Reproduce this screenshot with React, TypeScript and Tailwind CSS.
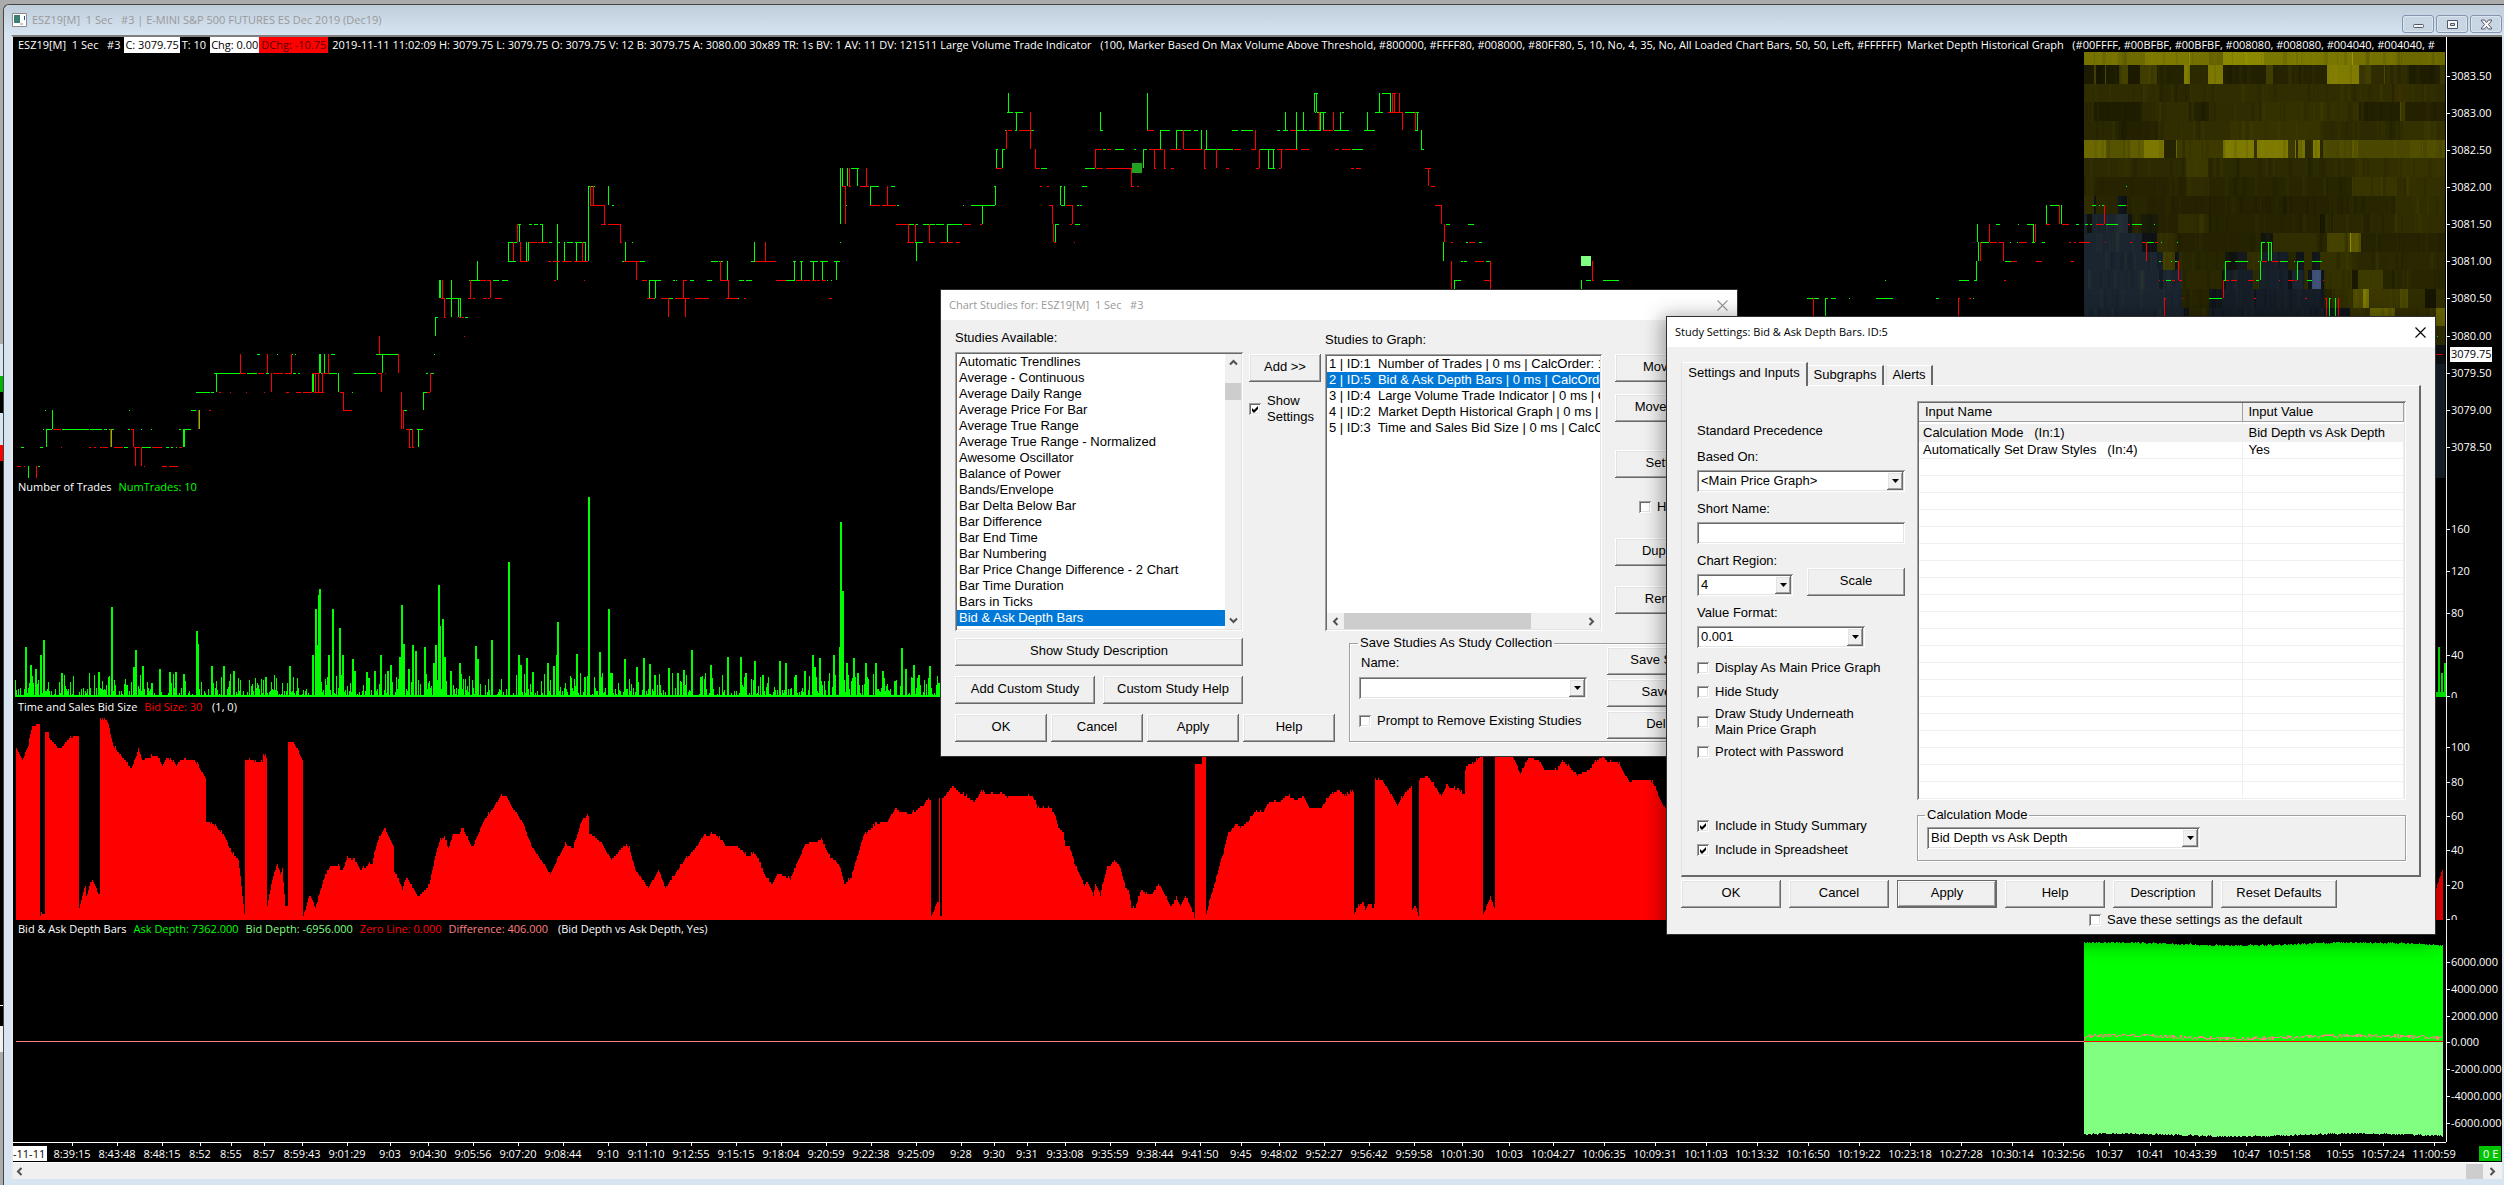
import { useId, type ReactNode } from 'react'
import clsx from 'clsx'

const SUNKEN = 'shadow-[inset_1px_1px_#a0a0a0,inset_-1px_-1px_#fff,inset_2px_2px_#696969,inset_-2px_-2px_#e3e3e3]'
const RAISED = 'shadow-[inset_-1px_-1px_#696969,inset_1px_1px_#fff,inset_-2px_-2px_#a0a0a0,inset_2px_2px_#e3e3e3]'

/* ---------- chart data ---------- */

// plot area in drawing units, one unit per pixel at full size
const LEFT = 13
const WIDTH = 2433

const PANELS = [
    { top: 37, size: 441 },
    { top: 478, size: 220 },
    { top: 698, size: 222 },
    { top: 920, size: 222 },
]

// y of every quarter point, from 3083.25 down to 3078.25
const TICKS = [93, 112, 130, 149, 168, 186, 205, 224, 242, 261, 280, 298, 317, 336, 354, 373, 392, 410, 429, 447, 466, 479]

// horizontal runs for each price tick
const RUNS = [
    'g1315-1318 g1382-1391 r1392-1396',
    'g1007-1013 g1015-1023 g1315-1316 g1317-1326 g1342-1344 g1375-1383 r1388-1402 g1405-1419',
    'g1005-1007 r1008-1012 g1015-1017 r1019-1030 g1030-1034 g1100-1103 r1147-1154 g1160-1170 g1176-1191 g1194-1198 g1232-1238 g1241-1253 g1277-1280 g1283-1288 r1290-1296 g1296-1307 g1309-1321 r1323-1333 g1334-1349 g1364-1375 g1415-1418',
    'g996-998 g1002-1005 r1096-1102 g1103-1106 r1107-1111 g1115-1124 g1134-1136 g1143-1147 r1149-1163 r1170-1181 r1184-1202 g1205-1216 g1217-1233 r1234-1241 r1251-1256 g1259-1275 r1277-1283 r1285-1298 r1301-1309 r1335-1339 r1342-1351 g1352-1363 g1421-1424',
    'g851-859 r996-1002 r1035-1040 g1041-1047 g1085-1095 r1096-1103 r1106-1131 r1154-1156 r1164-1166 r1171-1174 r1204-1206 r1226-1229 r1256-1259 g1268-1275 r1279-1281 r1351-1354 r1356-1361 r1425-1431',
    'g589-595 g608-609 r842-846 r849-851 r860-869 g870-879 g891-895 g994-996 r1040-1042 r1047-1049 g1060-1062 g1082-1087 r1131-1134 r1137-1139 r1431-1435 g2126-2127',
    'r590-604 g612-614 g846-847 r870-880 r882-896 g897-899 g963-964 g971-995 r1049-1053 g1061-1065 r1066-1072 g1077-1079 g1080-1082 r1435-1442 g2050-2059 g2092-2096 g2099-2100 g2102-2105 g2118-2126 r2127-2128',
    'g517-521 g529-532 g534-538 g540-543 g557-558 r601-606 r608-620 r896-908 g909-914 g915-918 g923-935 g936-944 g947-962 r964-971 r980-982 g1056-1059 r1070-1072 g1075-1080 g1446-1450 g1468-1474 g1996-2000 g2018-2019 g2027-2033 r2046-2050 r2062-2069 g2076-2079 g2085-2088 g2090-2092 r2096-2104 g2106-2118 r2128-2130 g2132-2142 g2154-2155',
    'g508-517 r529-537 r538-548 g549-552 g557-560 g567-573 g575-585 r620-622 g632-633 g840-841 r907-914 g915-923 r929-935 r940-947 r948-953 r956-960 r1054-1056 r1074-1075 r1451-1453 g1466-1468 r1469-1475 g1479-1482 g1980-1989 r1990-1997 r1999-2003 g2010-2011 g2017-2018 r2019-2027 g2032-2035 g2042-2045 r2069-2071 r2074-2076 r2079-2090 r2105-2106 r2130-2132 r2142-2147 g2147-2154 r2155-2158 g2161-2162 g2177-2178 g2262-2265 g2267-2272',
    'g508-516 r520-528 r548-551 r553-560 r562-572 r574-588 g622-626 r624-640 g640-645 g711-718 g719-723 g751-755 r755-776 g793-796 g800-803 g810-818 g820-828 g834-840 g1461-1463 g1464-1467 r1475-1484 g1486-1490 g2005-2011 r2011-2017 r2036-2042 r2071-2074 g2159-2161 r2162-2163 g2171-2172 g2175-2177 r2177-2179 g2225-2231 g2235-2237 g2237-2248 g2258-2259 r2262-2267 r2272-2279 g2280-2288 g2294-2295 g2297-2304 g2312-2322',
    'g469-480 r480-486 r487-491 g493-499 g502-508 r554-556 r584-585 r642-647 g649-661 g673-675 g676-677 r684-687 g690-694 g707-712 r720-728 g739-744 g746-752 r776-786 g786-795 r796-803 r804-810 r812-816 r817-820 r822-826 g827-828 g831-832 g1455-1461 r1484-1490 g1586-1591 r1592-1594 g1603-1619 g1885-1886 g1959-1969 g1974-1977 r2004-2006 r2159-2160 r2163-2164 g2166-2171 r2172-2175 r2179-2182 g2223-2226 r2226-2229 r2231-2237 r2248-2254 g2256-2259 r2279-2280 r2288-2294 r2295-2297 g2307-2312 r2323-2324',
    'r441-445 g446-461 r468-471 r473-475 r483-487 r488-490 r495-502 r647-654 g654-655 r661-668 g668-673 r675-690 r695-709 r726-738 g738-739 r744-746 r829-832 g1807-1819 g1811-1813 g1826-1828 g1831-1836 g1849-1850 g1876-1893 g1936-1939 r1958-1960 r1969-1971 g1973-1974 r2164-2166 r2182-2183 g2209-2222 r2254-2256 r2305-2307 r2325-2327 g2329-2331 r2338-2339',
    'g435-438 r444-446 r459-461 r462-464 g465-468',
    'r464-465 g2437-2438',
    'g257-260 g277-278 g291-293 g295-296 g331-335 g376-398 g434-435 r2436-2443',
    'g214-240 r240-246 g247-257 r258-264 g266-269 r273-283 r285-292 g293-296 g298-300 r312-320 g321-323 r324-329 g329-337 g354-376 r378-382 r385-386 g426-428 g430-434',
    'g196-210 g211-214 r219-221 r230-231 r246-247 r264-265 r286-289 r296-301 r303-312 r314-324 r340-344 g352-353 g423-427 r427-430',
    'g45-46 g129-130 g191-196 r209-211 r343-352 g404-407',
    'g43-44 g46-52 r53-61 g62-89 g90-102 g104-107 g109-114 g128-130 r131-134 g141-142 g151-152 g179-181 g184-191 r406-409 g410-412 g417-423',
    'g21-24 g40-43 r61-62 r89-91 r94-96 r100-102 r103-108 r114-123 g124-128 r134-140 g141-151 r152-162 g166-169 g171-173 g176-177 r179-182 r409-411 r412-414',
    'r17-21 r24-25 g38-40 r144-145 r162-167 r169-178',
]

// vertical strokes: colour, x, from tick, to tick
const STEMS =
    'g28:20-21 r36:20-21 g46:18-19 g52:17-18 r110:18-19 g111:18-19 r133:18-19 r135:19-20 r141:19-20 g183:18-19 g184:18-19 r198:17-18 g199:17-18 g216:15-16 r240:14-15 r267:14-15 r271:15-16 r291:14-15 g312:15-16 g313:15-16 r315:15-16 r318:15-16 r322:15-16 g319:14-15 g320:14-15 g324:14-15 r328:14-15 g338:15-16 r343:16-17 r379:13-14 r381:15-16 g382:14-15 r398:14-15 r401:16-18 r403:17-18 r409:18-19 r412:18-19 g418:18-19 g423:16-17 r430:15-16 ' +
    'g435:12-13 g439:10-11 g440:10-11 r442:10-11 r444:11-12 g451:10-12 g458:11-12 g460:11-12 r470:10-11 g477:9-10 r490:10-11 g508:8-9 r513:8-9 r517:7-8 g519:7-8 r520:8-9 g526:8-9 g528:8-9 g542:7-8 g557:7-10 g564:8-9 g576:8-9 r582:8-9 g585:8-9 g588:5-9 r590:5-6 r593:5-6 r604:6-7 g608:5-6 r620:7-8 g625:8-9 r636:9-10 g649:10-11 g655:10-11 r668:11-12 r683:10-11 r685:11-12 r720:9-10 g727:9-10 r728:10-11 g754:8-9 r765:8-9 g794:9-10 g801:9-10 g813:9-10 g822:9-10 g836:9-10 ' +
    'g840:4-7 g842:4-5 r845:5-7 g847:4-5 r849:4-5 g857:4-5 r866:4-5 g870:5-6 r887:5-6 r908:7-8 r915:7-8 g916:8-9 r929:7-8 g947:7-8 g982:6-7 g995:5-6 g996:3-4 g1002:3-4 r1006:2-3 g1008:0-1 g1016:1-2 r1030:1-3 r1035:3-4 r1052:6-7 r1053:7-8 g1055:7-8 g1060:5-6 g1064:5-6 r1072:6-7 r1095:3-4 g1100:1-2 r1131:4-5 g1143:3-4 g1147:0-2 r1154:3-4 g1160:2-3 r1164:3-4 g1176:2-3 r1183:2-3 g1201:2-3 r1204:3-4 g1206:2-3 r1216:3-4 r1255:2-3 r1259:3-4 g1268:3-4 g1273:3-4 r1281:3-4 g1285:1-2 g1296:1-3 g1303:1-2 g1314:0-1 g1316:0-1 r1319:1-2 g1320:1-2 g1323:1-2 r1333:1-2 g1340:1-2 g1367:1-2 g1379:0-1 g1390:0-1 r1392:0-1 r1394:0-1 r1399:0-1 r1402:1-2 r1415:1-2 g1417:1-2 g1421:2-3 r1428:4-5 r1441:6-7 g1443:8-9 r1444:7-8 r1451:9-12 g1454:10-12 r1490:9-12 g1581:10-12 r1592:9-10 ' +
    'r1813:11-13 g1825:11-13 r1958:11-13 g1976:9-10 g1977:7-8 g1978:8-9 r1980:8-9 r1989:7-8 r2003:8-9 g2033:7-8 r2035:7-8 g2046:6-7 r2059:6-7 g2061:6-7 r2104:6-7 r2146:8-9 r2164:11-12 r2178:9-10 r2223:10-11 g2225:9-10 g2260:9-10 g2261:8-9 g2268:8-9 g2271:8-9 g2297:9-10 r2326:11-12 g2329:11-12 g2335:11-12 r2338:11-12'

// market depth rows: y, then "start colour" pairs up to the right edge
const DEPTH: [number, string][] = [
    [52, '2084 757200 2118 6c6900 2145 7d7900 2189 a09a00 2190 747000 2209 666200 2223 8a8700 2264 7a7700 2352 9a9500 2353 747100 2398 6b6800'],
    [65, '2084 1c1a00 2094 403e00 2096 181700 2105 4a4700 2106 1c1b00 2119 454200 2128 1b1a00 2140 403d00 2157 242300 2184 807c00 2190 2b2900 2208 7d7900 2223 222000 2266 403d00 2273 262400 2327 7f7b00 2359 413e00 2371 2e2c00 2384 4b4800 2385 2e2c00 2409 1f1d00 2440 383600'],
    [84, '2084 2e2c00 2158 2a2800 2190 302e00 2394 342e00 2409 302e00'],
    [102, '2084 2c2a00 2094 1f1d00 2142 2b2900 2158 302e00 2189 232100 2209 2e2c00 2262 343100 2359 222000 2400 4f4c00 2401 383500 2405 232100'],
    [121, '2084 2a2800 2118 232100 2158 302e00 2230 363300 2323 2c2a00 2400 343100'],
    [140, '2084 6b6800 2106 555200 2129 605d00 2144 7b7700 2164 262400 2176 686400 2177 3d3a00 2223 6f6b00 2225 7e7a00 2254 343100 2257 7e7a00 2288 3d3a00 2295 7b7700 2296 2e2c00 2298 757100 2305 2c2a00 2313 7e7a00 2320 2a2800 2323 4a4700 2352 5b5800 2358 4a4700 2410 514e00'],
    [158, '2084 2c2a00 2186 3b3800 2208 2c2a00 2352 322f00 2398 363300'],
    [177, '2084 262400 2186 2e2c00 2209 282600 2352 383500 2398 322f00'],
    [196, '2084 302e00 2094 0f1318 2096 282600 2118 10151b 2127 282600 2140 242200 2352 282600 2395 302e00'],
    [214, '2084 1b242c 2087 10110b 2092 1a242e 2117 1f2a35 2128 10140f 2132 242300 2141 1a1c08 2158 242200 2178 302e00 2209 262400 2320 141500 2325 2a2800 2395 302e00'],
    [233, '2084 1a2530 2142 0e1214 2157 2e2c00 2177 242200 2261 12150b 2273 302e00 2320 282600 2327 454200 2350 908c00 2351 5e5a00 2361 262400'],
    [252, '2084 1a2530 2157 161f28 2163 403d00 2175 10151b 2179 282600 2225 10130e 2237 15191c 2247 302e00 2261 151d26 2288 282600 2296 10151b 2304 302e00 2312 12161a 2320 343100 2352 2a2800'],
    [270, '2084 1a2530 2159 121a22 2163 1a2530 2182 2a2800 2222 10140f 2226 151d26 2253 302e00 2259 15202a 2288 0e1216 2292 1a2530 2304 302e00 2308 10151b 2312 3f5077 2321 10151b 2324 343100 2352 1a1900 2358 3d3a00 2383 282600'],
    [289, '2084 1a2530 2182 262400 2209 0f151b 2222 151d26 2254 0f151b 2256 151d26 2324 262400 2332 302e00 2353 4b4800 2363 7b7700 2369 3a3700 2400 4e4b00 2408 302e00 2425 161500 2436 302e00'],
    [308, '2084 1a2530 2184 10151b 2189 282600 2209 151d26 2324 0f151b 2350 343100 2370 686400 2395 322f00 2436 686400'],
    [326, '2436 343100'],
    [345, '2436 0e1216'],
    [364, '2436 17212b'],
    [479, ''],
]

// tall bars of the trade count: x, height
const PEAKS =
    '25,50 30,32 35,28 40,42 43,57 61,24 98,25 111,90 133,30 135,47 142,31 159,28 169,25 175,25 183,23 196,66 197,53 211,31 223,31 233,26 265,20 289,31 312,42 315,88 317,52 318,102 319,108 328,42 332,88 339,69 342,42 352,38 354,26 366,25 374,26 380,42 387,26 390,32 399,40 401,92 403,53 408,28 412,52 415,46 424,50 433,34 435,52 438,112 439,71 442,78 444,40 450,26 459,34 475,51 477,38 491,57 508,135 518,42 520,32 526,39 532,25 547,34 553,31 556,42 557,75 576,43 584,20 588,200 599,45 608,88 611,24 624,38 636,30 643,39 649,33 654,22 668,29 677,24 683,27 691,47 700,20 710,32 727,40 740,40 745,24 754,36 762,22 779,36 785,34 795,22 804,26 812,42 814,30 819,39 833,42 839,50 840,175 842,106 846,34 853,39 857,24 865,34 875,34 882,26 894,16 901,49 905,28 913,32 918,22 929,31 938,14 940,41 2438,50 2441,24 2444,34'

// bid size outline
const BID_SIZE =
    '16,748 22,760 28,745 31,729 37,724 40,724 40,917 41,912 44,916 45,731 48,731 49,738 59,750 69,738 78,735 79,908 85,885 86,896 92,879 99,896 100,719 106,719 113,746 131,769 138,750 142,760 156,755 162,765 166,757 176,765 180,760 194,760 206,779 206,821 216,827 224,836 231,852 238,859 244,913 245,760 262,762 263,755 266,757 267,905 272,879 277,864 280,874 282,870 285,906 287,906 288,741 293,741 302,759 303,916 309,895 312,899 315,908 324,877 330,866 337,865 341,872 347,858 355,861 360,870 372,863 376,845 384,827 393,846 394,871 402,889 406,877 418,897 429,885 433,865 439,842 444,836 448,848 453,833 459,833 462,828 472,848 483,822 492,809 501,795 505,795 513,809 522,822 531,846 550,874 565,844 573,848 582,819 588,815 589,833 600,842 611,860 624,845 629,848 635,870 648,888 658,870 665,888 683,862 695,848 703,836 715,834 725,845 737,846 746,856 755,854 767,880 772,884 778,873 790,879 805,844 821,840 830,857 839,865 844,884 851,877 863,836 875,824 887,821 894,810 911,814 923,805 926,800 930,800 931,916 937,902 939,798 940,798 940,916 942,798 947,793 952,786 960,793 974,802 980,792 994,795 1002,793 1007,797 1019,795 1032,796 1037,807 1049,808 1054,813 1058,827 1063,832 1065,846 1069,846 1074,863 1084,886 1087,881 1093,895 1095,883 1100,895 1106,870 1114,860 1120,867 1125,887 1129,893 1131,907 1135,907 1141,889 1146,894 1152,894 1158,884 1164,893 1171,907 1176,898 1180,905 1185,895 1189,903 1194,917 1195,764 1201,764 1202,750 1205,750 1206,914 1208,905 1216,878 1223,853 1227,836 1236,823 1240,828 1248,821 1254,812 1263,812 1268,803 1279,802 1286,795 1295,800 1303,796 1309,807 1320,809 1328,797 1338,790 1345,796 1353,791 1354,913 1357,908 1362,902 1365,909 1368,903 1373,909 1374,903 1375,779 1381,779 1390,793 1397,805 1406,791 1411,786 1412,910 1415,905 1418,915 1419,779 1427,776 1432,783 1441,796 1446,786 1458,790 1464,795 1465,769 1468,764 1474,763 1480,756 1482,756 1483,914 1490,897 1494,908 1495,748 1510,750 1520,774 1528,757 1539,761 1544,769 1557,769 1562,760 1567,766 1577,775 1589,770 1596,761 1603,756 1606,762 1618,763 1629,782 1636,780 1651,781 1656,790 1661,803 1668,812 2430,905 2436,887 2443,867'

const TIMES =
    '72 8:39:15,117 8:43:48,162 8:48:15,200 8:52,231 8:55,264 8:57,302 8:59:43,347 9:01:29,390 9:03,428 9:04:30,473 9:05:56,518 9:07:20,563 9:08:44,608 9:10,646 9:11:10,691 9:12:55,736 9:15:15,781 9:18:04,826 9:20:59,871 9:22:38,916 9:25:09,961 9:28,994 9:30,1027 9:31,1065 9:33:08,1110 9:35:59,1155 9:38:44,1200 9:41:50,1241 9:45,1279 9:48:02,1324 9:52:27,1369 9:56:42,1414 9:59:58,1462 10:01:30,1509 10:03,1553 10:04:27,1604 10:06:35,1655 10:09:31,1706 10:11:03,1757 10:13:32,1808 10:16:50,1859 10:19:22,1910 10:23:18,1961 10:27:28,2012 10:30:14,2063 10:32:56,2109 10:37,2150 10:41,2195 10:43:39,2246 10:47,2289 10:51:58,2340 10:55,2383 10:57:24,2434 11:00:59'

const SCALES: [number, string][][] = [
    [[76, '3083.50'], [113, '3083.00'], [150, '3082.50'], [187, '3082.00'], [224, '3081.50'], [261, '3081.00'], [298, '3080.50'], [336, '3080.00'], [373, '3079.50'], [410, '3079.00'], [447, '3078.50']],
    [[529, '160'], [571, '120'], [613, '80'], [655, '40'], [696, '0']],
    [[747, '100'], [782, '80'], [816, '60'], [850, '40'], [885, '20'], [919, '0']],
    [[962, '6000.000'], [989, '4000.000'], [1016, '2000.000'], [1042, '0.000'], [1069, '-2000.000'], [1096, '-4000.000'], [1123, '-6000.000']],
]

const STUDIES = [
    'Automatic Trendlines', 'Average - Continuous', 'Average Daily Range', 'Average Price For Bar', 'Average True Range',
    'Average True Range - Normalized', 'Awesome Oscillator', 'Balance of Power', 'Bands/Envelope', 'Bar Delta Below Bar',
    'Bar Difference', 'Bar End Time', 'Bar Numbering', 'Bar Price Change Difference - 2 Chart', 'Bar Time Duration',
    'Bars in Ticks', 'Bid & Ask Depth Bars', 'Bid & Ask Depth Bars Old',
]

const GRAPHED = [
    '1 | ID:1  Number of Trades | 0 ms | CalcOrder: 1',
    '2 | ID:5  Bid & Ask Depth Bars | 0 ms | CalcOrder: 2',
    '3 | ID:4  Large Volume Trade Indicator | 0 ms | CalcOrder: 3',
    '4 | ID:2  Market Depth Historical Graph | 0 ms | CalcOrder: 4',
    '5 | ID:3  Time and Sales Bid Size | 0 ms | CalcOrder: 5',
]

/* ---------- helpers ---------- */

const random = (n: number) => {
    const v = Math.sin(n * 12.9898 + 4.137) * 43758.5453
    return v - Math.floor(v)
}

const points = (s: string) => s.split(' ').map((p) => p.split(',').map(Number))

const runPath = (color: string) =>
    RUNS.map((row, i) =>
        row.split(' ').filter((r) => r[0] === color).map((r) => {
            const [a, b] = r.slice(1).split('-').map(Number)
            return `M${a} ${TICKS[i]}h${b - a}v1h${a - b}z`
        }).join('')
    ).join('')

const stemPath = (color: string) =>
    STEMS.split(' ').filter((s) => s[0] === color).map((s) => {
        const [x, range] = s.slice(1).split(':')
        const [a, b] = range.split('-').map(Number)
        return `M${x} ${TICKS[a]}h1V${TICKS[b]}h-1z`
    }).join('')

const tradesPath = () => {
    let d = ''
    for (let x = 15; x < 943; x++) {
        const r = random(x)
        const h = r > 0.75 ? 8 + random(x + 5000) * 16 : r > 0.45 ? 3 + random(x + 900) * 6 : 2
        d += `M${x} ${697 - Math.round(h)}h1V697h-1z`
    }
    for (const [x, h] of points(PEAKS)) d += `M${x} ${697 - h}h2V697h-2z`
    return d + 'M2436 692h9v5h-9z'
}

const bidSizePath = () => {
    const p = points(BID_SIZE)
    let d = ''
    for (let i = 0; i < p.length - 1; i++) {
        const [x1, y1] = p[i]
        const [x2, y2] = p[i + 1]
        const jump = Math.abs(y2 - y1) > 60
        for (let x = x1; x < x2; x++) {
            const y = jump ? y1 : y1 + ((y2 - y1) * (x - x1)) / (x2 - x1)
            const bump = random(x) > 0.85 ? 2 : 0
            d += `M${x} ${Math.round(y / 2) * 2 - bump}h1V920h-1z`
        }
    }
    return d
}

const edge = (base: number, amp: number, seed: number) => {
    let d = ''
    for (let x = 2084; x < 2443; x++) {
        const wave = Math.sin((x - 2060) / 38) * -1.5
        d += `L${x} ${Math.round(base + wave + (random(x + seed) - 0.5) * amp)}`
    }
    return d
}

const pct = (v: number, from: number, size: number) => `${((v - from) / size) * 100}%`

/* ---------- chart ---------- */

const Plot = ({ index, label, children }: { index: number, label: ReactNode, children: ReactNode }) => {
    const { top, size } = PANELS[index]
    return (
        <div className="relative min-h-0 overflow-hidden">
            <svg className="absolute inset-0 h-full w-full" viewBox={`${LEFT} ${top} ${WIDTH} ${size}`} preserveAspectRatio="none" shapeRendering="crispEdges" aria-hidden="true">
                {children}
            </svg>
            <p className={clsx('relative flex items-center overflow-hidden whitespace-pre pl-[5px] text-white', index === 0 ? 'h-4' : 'h-[18px] gap-[7px]')}>
                {label}
            </p>
        </div>
    )
}

const Scale = ({ index, children }: { index: number, children?: ReactNode }) => {
    const { top, size } = PANELS[index]
    return (
        <svg className="h-full w-full overflow-hidden border-l border-white fill-white">
            {SCALES[index].map(([y, text]) => (
                <g key={text}>
                    <rect x="0" y={pct(y, top, size)} width="3" height="1" />
                    <text x="4" y={pct(y, top, size)} dy="4">{text}</text>
                </g>
            ))}
            {children}
        </svg>
    )
}

const DepthMap = () => (
    <>
        {DEPTH.slice(0, -1).map(([y, row], i) => {
            const cells = row.split(' ')
            const height = DEPTH[i + 1][0] - y
            return cells.filter((_, k) => k % 2 === 0).map((start, k) => {
                const x = Number(start)
                const end = Number(cells[k * 2 + 2] ?? 2445)
                return <rect key={`${y}-${x}`} x={x} y={y} width={end - x} height={height} fill={`#${cells[k * 2 + 1]}`} />
            })
        })}
        {DEPTH.slice(0, 15).map(([y], i) =>
            Array.from({ length: 50 }, (_, k) => (
                <rect
                    key={`${y}-${k}`}
                    x={2084 + Math.floor(random(i * 97 + k) * 355)}
                    y={y}
                    width={1 + Math.floor(random(i * 31 + k + 400) * 4)}
                    height={DEPTH[i + 1][0] - y}
                    fill={k % 2 ? '#000' : '#fff040'}
                    opacity={k % 2 ? 0.08 : 0.02}
                />
            ))
        )}
    </>
)

const Chart = () => (
    <div className="flex min-h-0 flex-1 flex-col bg-black font-['Open_Sans','Noto_Sans',sans-serif] text-[11px] leading-4">
        <div className="grid min-h-0 flex-1 grid-cols-[1fr_56px] grid-rows-[441fr_220fr_222fr_222fr]">
            <Plot
                index={0}
                label={
                    <>
                        <span>ESZ19[M]  1 Sec   #3</span>
                        <span className="ml-1 bg-white px-px text-black">C: 3079.75</span>
                        <span className="ml-0.5">T: 10</span>
                        <span className="ml-1 bg-white px-px text-black">Chg: 0.00</span>
                        <span className="bg-[#ff0000] px-0.5 text-[#5a0000]">DChg: -10.75</span>
                        <span className="ml-1">
                            2019-11-11 11:02:09 H: 3079.75 L: 3079.75 O: 3079.75 V: 12 B: 3079.75 A: 3080.00 30x89 TR: 1s BV: 1 AV: 11 DV: 121511 Large Volume Trade Indicator   (100, Marker Based On Max Volume Above Threshold, #800000, #FFFF80, #008000, #80FF80, 5, 10, No, 4, 35, No, All Loaded Chart Bars, 50, 50, Left, #FFFFFF)  Market Depth Historical Graph   (#00FFFF, #00BFBF, #00BFBF, #008080, #008080, #004040, #004040, #
                        </span>
                    </>
                }
            >
                <DepthMap />
                <path d={runPath('g') + stemPath('g')} fill="#00ff00" />
                <path d={runPath('r') + stemPath('r')} fill="#ff0000" />
                <rect x="1132" y="163" width="10" height="10" fill="#22a022" />
                <rect x="1581" y="256" width="10" height="10" fill="#80ff80" />
            </Plot>
            <Scale index={0}>
                <rect x="3" y={pct(347, 37, 441)} width="42" height="15" />
                <text className="fill-black" x="4" y={pct(354, 37, 441)} dy="4">3079.75</text>
            </Scale>

            <Plot index={1} label={<><span>Number of Trades</span><span className="text-[#00ff00]">NumTrades: 10</span></>}>
                <path d={tradesPath()} fill="#00ff00" />
            </Plot>
            <Scale index={1} />

            <Plot index={2} label={<><span>Time and Sales Bid Size</span><span className="text-[#ff0000]">Bid Size: 30</span><span> (1, 0)</span></>}>
                <path d={bidSizePath()} fill="#ff0000" />
            </Plot>
            <Scale index={2} />

            <Plot
                index={3}
                label={
                    <>
                        <span>Bid &amp; Ask Depth Bars</span>
                        <span className="text-[#00ff00]">Ask Depth: 7362.000</span>
                        <span className="text-[#80ff80]">Bid Depth: -6956.000</span>
                        <span className="text-[#ff0000]">Zero Line: 0.000</span>
                        <span className="text-[#ff8080]">Difference: 406.000</span>
                        <span> (Bid Depth vs Ask Depth, Yes)</span>
                    </>
                }
            >
                <path d={`M2084 1041${edge(944, 2, 10)}L2443 944V1041z`} fill="#00ff00" />
                <path d={`M2084 1041${edge(1135, 2, 70)}L2443 1137V1041z`} fill="#80ff80" />
                <path d="M2084 1041h359v1h-359z" fill="#ff0000" />
                <path d="M16 1041h2068v1H16z" fill="#ff8080" />
                <path d={`M2084 1041${edge(1037, 4, 200)}`} fill="none" stroke="#ff8080" />
            </Plot>
            <Scale index={3} />
        </div>
        <svg className="h-5 w-full shrink-0 fill-white">
            <rect width={pct(2446, 13, 2489)} height="1" />
            <rect y="4" width="34" height="15" />
            <text className="fill-black" x="0" y="16">-11-11</text>
            {TIMES.split(',').map((t) => {
                const [x, text] = t.split(' ')
                const left = pct(Number(x), 13, 2489)
                return (
                    <g key={text}>
                        <rect x={left} width="1" height="4" />
                        <text x={left} y="16" textAnchor="middle">{text}</text>
                    </g>
                )
            })}
            <rect x={pct(2479, 13, 2489)} y="4" width="22" height="15" fill="#00c400" />
            <text x={pct(2483, 13, 2489)} y="16">0 E</text>
        </svg>
    </div>
)

/* ---------- classic controls ---------- */

const Chevron = ({ turn }: { turn?: string }) => (
    <svg className={clsx('size-[9px]', turn)} viewBox="0 0 9 9" fill="none" stroke="#505050" strokeWidth="2" aria-hidden="true">
        <path d="M1 6.5 4.5 3 8 6.5" />
    </svg>
)

const Button = ({ children, className, pressed }: { children: ReactNode, className?: string, pressed?: boolean }) => (
    <button
        type="button"
        className={clsx('h-7 shrink-0 overflow-hidden whitespace-nowrap bg-[#f0f0f0] pb-0.5 text-center', pressed && 'border border-[#696969]', RAISED, className)}
    >
        {children}
    </button>
)

const Check = ({ children, checked, className }: { children: ReactNode, checked?: boolean, className?: string }) => {
    const id = useId()
    return (
        <div className={clsx('flex items-center gap-1.5', className)}>
            <span className="grid size-3 shrink-0">
                <input id={id} type="checkbox" defaultChecked={checked} className={clsx('peer col-start-1 row-start-1 size-3 appearance-none bg-white', SUNKEN)} />
                <svg className="pointer-events-none invisible z-10 col-start-1 row-start-1 size-3 peer-checked:visible" viewBox="0 0 12 12" aria-hidden="true">
                    <path d="M3 5l2 2 4-4v3l-4 4-2-2z" />
                </svg>
            </span>
            <label htmlFor={id} className="whitespace-pre leading-4">{children}</label>
        </div>
    )
}

const Select = ({ value, id, label, className }: { value: string, id?: string, label?: string, className?: string }) => (
    <div className={clsx('relative h-[22px] shrink-0', className)}>
        <select id={id} aria-label={label} defaultValue={value} className={clsx('h-full w-full appearance-none bg-white pl-1', SUNKEN)}>
            <option>{value}</option>
        </select>
        <span className={clsx('pointer-events-none absolute inset-y-0.5 right-0.5 flex w-4 items-center justify-center bg-[#f0f0f0]', RAISED)}>
            <svg className="h-1 w-[7px]" viewBox="0 0 7 4" aria-hidden="true"><path d="M0 0h7L3.5 4z" /></svg>
        </span>
    </div>
)

const Close = ({ className }: { className?: string }) => (
    <button type="button" aria-label="Close" className={clsx('mr-[9px]', className)}>
        <svg className="size-[11px]" viewBox="0 0 11 11" stroke="currentColor" strokeWidth="1.1"><path d="M.5.5l10 10M10.5.5l-10 10" /></svg>
    </button>
)

const Dialog = ({ title, className, muted, children }: { title: string, className: string, muted?: boolean, children: ReactNode }) => (
    <section className={clsx("absolute flex flex-col border border-[#303030] bg-[#f0f0f0] font-['Liberation_Sans',Arial,sans-serif] text-[13px] leading-4 text-black", className)}>
        <header className="flex h-[30px] items-center justify-between bg-white pl-2">
            <h2 className={clsx("whitespace-pre font-['Open_Sans','Noto_Sans',sans-serif] text-[11px]", muted && 'text-[#999]')}>{title}</h2>
            <Close className={muted ? 'text-[#999]' : 'text-black'} />
        </header>
        {children}
    </section>
)

const ChartStudies = () => {
    const name = useId()
    return (
        <Dialog title="Chart Studies for: ESZ19[M]  1 Sec   #3" muted className="left-[940px] top-[289px] h-[468px] w-[798px]">
            <div className="flex min-h-0 flex-1 overflow-hidden pl-3.5 pt-2.5">
                <div className="flex w-72 shrink-0 flex-col">
                    <h3>Studies Available:</h3>
                    <div className={clsx('mt-1.5 flex h-[279px] bg-white p-0.5', SUNKEN)}>
                        <ul className="flex-1 overflow-hidden">
                            {STUDIES.map((s, i) => (
                                <li key={s} className={clsx('h-4 whitespace-nowrap pl-0.5', i === 16 && 'bg-[#0078d7] text-white')}>{s}</li>
                            ))}
                        </ul>
                        <div className="flex w-4 flex-col items-center bg-[#f0f0f0] py-1">
                            <Chevron />
                            <div className="mt-4 h-[17px] w-full bg-[#cdcdcd]" />
                            <div className="flex-1" />
                            <Chevron turn="rotate-180" />
                        </div>
                    </div>
                    <Button className="mt-[7px]">Show Study Description</Button>
                    <div className="mt-2.5 flex gap-2">
                        <Button className="flex-1">Add Custom Study</Button>
                        <Button className="flex-1">Custom Study Help</Button>
                    </div>
                    <div className="mt-2.5 flex gap-1">
                        <Button className="w-[92px]">OK</Button>
                        <Button className="w-[92px]">Cancel</Button>
                        <Button className="w-[92px]">Apply</Button>
                        <Button className="w-[92px]">Help</Button>
                    </div>
                </div>
                <div className="ml-1.5 flex w-[72px] shrink-0 flex-col pt-6">
                    <Button>Add &gt;&gt;</Button>
                    <Check checked className="mt-[11px]">{'Show\nSettings'}</Check>
                </div>
                <div className="ml-1 flex min-w-0 flex-1 flex-col pt-0.5">
                    <div className="flex">
                        <div className="w-[277px] shrink-0">
                            <h3>Studies to Graph:</h3>
                            <div className={clsx('mt-1.5 flex h-[277px] flex-col bg-white p-0.5', SUNKEN)}>
                                <ul className="flex-1 overflow-hidden">
                                    {GRAPHED.map((s, i) => (
                                        <li key={s} className={clsx('h-4 overflow-hidden whitespace-pre pl-0.5', i === 1 && 'bg-[#0078d7] text-white')}>{s}</li>
                                    ))}
                                </ul>
                                <div className="flex h-4 items-center justify-between bg-[#f0f0f0] px-1">
                                    <Chevron turn="-rotate-90" />
                                    <div className="ml-1 mr-auto h-full w-[187px] bg-[#cdcdcd]" />
                                    <Chevron turn="rotate-90" />
                                </div>
                            </div>
                        </div>
                        <div className="ml-[13px] flex w-[108px] shrink-0 flex-col pt-[22px]">
                            <Button>Move Up</Button>
                            <Button className="mt-3">Move Down</Button>
                            <Button className="mt-7">Settings</Button>
                            <Check className="ml-6 mt-[21px]">Hide</Check>
                            <Button className="mt-[23px]">Duplicate</Button>
                            <Button className="mt-5">Remove</Button>
                        </div>
                    </div>
                    <fieldset className="ml-6 mt-1 flex h-[107px] w-[382px] border border-[#a0a0a0] pl-[9px] shadow-[1px_1px_#fff,inset_1px_1px_#fff]">
                        <legend className="-ml-px px-0.5">Save Studies As Study Collection</legend>
                        <div className="w-[228px] shrink-0 pt-1">
                            <label htmlFor={name} className="block pl-0.5">Name:</label>
                            <Select id={name} value="" className="mt-1.5 w-full" />
                            <Check className="mt-3.5">Prompt to Remove Existing Studies</Check>
                        </div>
                        <div className="-mt-1 ml-5 flex w-[116px] flex-col gap-1">
                            <Button>Save Single</Button>
                            <Button>Save All</Button>
                            <Button>Delete</Button>
                        </div>
                    </fieldset>
                </div>
            </div>
        </Dialog>
    )
}

const StudySettings = () => {
    const id = useId()
    return (
        <Dialog title="Study Settings: Bid & Ask Depth Bars. ID:5" className="left-[1666px] top-[316px] h-[619px] w-[770px] shadow-[0_4px_18px_4px_rgba(0,0,0,0.35)]">
            <div className="px-3.5 pt-[15px]">
                <div role="tablist" className="flex h-[23px] items-end">
                    <button role="tab" aria-selected="true" className="z-10 -mb-px h-6 w-[127px] border-l border-t border-l-[#e3e3e3] border-r-2 border-t-white border-r-[#696969] bg-[#f0f0f0] pb-1">Settings and Inputs</button>
                    <button role="tab" aria-selected="false" className="h-5 w-[76px] border-r-2 border-t border-t-white border-r-[#696969] pb-0.5">Subgraphs</button>
                    <button role="tab" aria-selected="false" className="ml-0.5 h-5 w-[47px] border-l border-r-2 border-t border-l-[#e3e3e3] border-t-white border-r-[#696969] pb-0.5">Alerts</button>
                </div>
                <div className="flex h-[492px] border-b-2 border-l border-r-2 border-t border-b-[#696969] border-l-[#e3e3e3] border-r-[#696969] border-t-white pl-[15px]">
                    <div className="flex w-52 shrink-0 flex-col pt-[37px]">
                        <p>Standard Precedence</p>
                        <label htmlFor={id + 'based'} className="mt-2.5">Based On:</label>
                        <Select id={id + 'based'} value="<Main Price Graph>" className="mt-[5px]" />
                        <label htmlFor={id + 'short'} className="mt-[9px]">Short Name:</label>
                        <input id={id + 'short'} type="text" className={clsx('mt-[5px] h-[22px] bg-white px-1', SUNKEN)} />
                        <div className="mt-[9px] flex items-end justify-between">
                            <div className="flex w-24 flex-col">
                                <label htmlFor={id + 'region'}>Chart Region:</label>
                                <Select id={id + 'region'} value="4" className="mt-[5px]" />
                            </div>
                            <Button className="w-[98px]">Scale</Button>
                        </div>
                        <label htmlFor={id + 'format'} className="mt-[9px]">Value Format:</label>
                        <Select id={id + 'format'} value="0.001" className="mt-[5px] w-[168px]" />
                        <Check className="mt-3">Display As Main Price Graph</Check>
                        <Check className="mt-2">Hide Study</Check>
                        <Check className="mt-1.5">{'Draw Study Underneath\nMain Price Graph'}</Check>
                        <Check className="mt-1.5">Protect with Password</Check>
                        <Check checked className="mt-[58px]">Include in Study Summary</Check>
                        <Check checked className="mt-2">Include in Spreadsheet</Check>
                    </div>
                    <div className="ml-3 mr-[13px] min-w-0 flex-1 pt-[15px]">
                        <div className={clsx('h-[399px] overflow-hidden bg-white p-0.5', SUNKEN)}>
                            <table className="w-full table-fixed border-collapse text-left">
                                <thead>
                                    <tr className="h-[18px] bg-[#f0f0f0]">
                                        <th className="w-[323px] border-b border-r border-[#a0a0a0] pl-1.5 font-normal">Input Name</th>
                                        <th className="border-b border-r border-[#a0a0a0] pl-1.5 font-normal">Input Value</th>
                                    </tr>
                                </thead>
                                <tbody>
                                    <tr className="h-[3px]"><td className="border-r border-[#f0f0f0] p-0" /><td className="p-0" /></tr>
                                    <tr className="h-[17px] bg-[#f0f0f0]">
                                        <td className="whitespace-pre border border-l-0 border-[#f0f0f0] py-0 pl-1">Calculation Mode   (In:1)</td>
                                        <td className="whitespace-pre border border-[#f0f0f0] py-0 pl-1.5">Bid Depth vs Ask Depth</td>
                                    </tr>
                                    <tr className="h-[17px]">
                                        <td className="whitespace-pre border border-l-0 border-[#f0f0f0] py-0 pl-1">Automatically Set Draw Styles   (In:4)</td>
                                        <td className="border border-[#f0f0f0] py-0 pl-1.5">Yes</td>
                                    </tr>
                                    {Array.from({ length: 20 }, (_, i) => (
                                        <tr key={i} className="h-[17px]">
                                            <td className="border border-l-0 border-[#f0f0f0]" />
                                            <td className="border border-[#f0f0f0]" />
                                        </tr>
                                    ))}
                                </tbody>
                            </table>
                        </div>
                        <fieldset className="mt-[7px] h-[54px] border border-[#a0a0a0] pl-[9px] shadow-[1px_1px_#fff,inset_1px_1px_#fff]">
                            <legend className="-ml-0.5 px-0.5">Calculation Mode</legend>
                            <Select label="Calculation Mode" value="Bid Depth vs Ask Depth" className="mt-1 w-[273px]" />
                        </fieldset>
                    </div>
                </div>
                <div className="mt-[3px] flex gap-2">
                    <Button className="w-[100px]">OK</Button>
                    <Button className="w-[100px]">Cancel</Button>
                    <Button pressed className="w-[100px]">Apply</Button>
                    <Button className="w-[100px]">Help</Button>
                    <Button className="w-[100px]">Description</Button>
                    <Button className="w-[116px]">Reset Defaults</Button>
                </div>
                <Check className="ml-[408px] mt-1">Save these settings as the default</Check>
            </div>
        </Dialog>
    )
}

/* ---------- window ---------- */

const WindowButton = ({ label, children }: { label: string, children: ReactNode }) => (
    <button type="button" aria-label={label} className="grid h-[18px] w-8 place-items-center rounded-[3px] border border-[#8394ad] bg-[#c8d5e3] shadow-[inset_0_0_0_1px_#dbe5f0]">
        <svg className="h-[11px] w-[13px]" viewBox="0 0 13 11" fill="#f4f4f4" stroke="#52566a" aria-hidden="true">{children}</svg>
    </button>
)

const App = () => (
    <main className="relative flex h-screen min-h-[720px] overflow-hidden bg-[#ababab]">
        <div className="flex w-[3px] shrink-0 flex-col bg-black" aria-hidden="true">
            <div className="h-[344px] bg-[#ababab]" />
            <div className="h-8 bg-[#d7e4f2]" />
            <div className="h-4 bg-[#00b400]" />
            <div className="mt-[21px] h-8 bg-[#d7e4f2]" />
            <div className="h-4 bg-[#ff0000]" />
            <div className="mt-[544px] h-px bg-white" />
            <div className="mt-5 h-[26px] bg-[#f0f0f0]" />
            <div className="flex-1 bg-[#ababab]" />
        </div>
        <div className="mt-1 flex min-w-0 flex-1 flex-col rounded-tl-md border-l border-t border-[#454545] bg-[#d7e4f2]">
            <header className="flex h-[30px] items-center rounded-tl-md bg-linear-to-b from-[#bfcddb] to-[#d7e4f2] pl-2">
                <svg className="h-[14px] w-[15px]" viewBox="0 0 15 14" aria-hidden="true">
                    <path d="M.5.5h14v13H.5z" fill="#fff" stroke="#8b8b8b" />
                    <path d="M2 2h6v8H2z" fill="#3c8074" />
                    <path d="M8 10h3v2H8z" fill="#c8c8c8" />
                    <path d="M12 3h1v4h-1z" fill="#2050a0" />
                </svg>
                <h1 className="ml-[5px] whitespace-pre font-['Open_Sans','Noto_Sans',sans-serif] text-[11px] text-[#999]">ESZ19[M]  1 Sec   #3 | E-MINI S&amp;P 500 FUTURES ES Dec 2019 (Dec19)</h1>
                <div className="ml-auto mr-0.5 mt-2 flex gap-0.5">
                    <WindowButton label="Minimize"><rect x="1.5" y="5.5" width="10" height="3" rx="1" /></WindowButton>
                    <WindowButton label="Restore"><path d="M1.5 1.5h10v8h-10zM4.5 4.5v2h4v-2z" fillRule="evenodd" /></WindowButton>
                    <WindowButton label="Close"><path d="M1.500 1h3l2 2.500L8.500 1h3v1L8.500 5.500l3 3.500v1h-3L6.500 7.500l-2 2.500h-3V9l3-3.500L1.500 2z" /></WindowButton>
                </div>
            </header>
            <div className="mb-1.5 ml-[7px] mr-0.5 flex min-h-0 flex-1 flex-col border-l-2 border-t-2 border-l-[#e8e8e8] border-t-[#808080]">
                <Chart />
                <div className="flex h-[17px] items-center border-t border-white bg-[#f0f0f0] pl-0.5 pr-[5px]">
                    <button type="button" aria-label="Scroll left"><Chevron turn="-rotate-90" /></button>
                    <div className="ml-auto mr-[5px] h-[15px] w-[17px] bg-[#cdcdcd]" />
                    <button type="button" aria-label="Scroll right"><Chevron turn="rotate-90" /></button>
                </div>
            </div>
        </div>
        <ChartStudies />
        <StudySettings />
    </main>
)

export default App
